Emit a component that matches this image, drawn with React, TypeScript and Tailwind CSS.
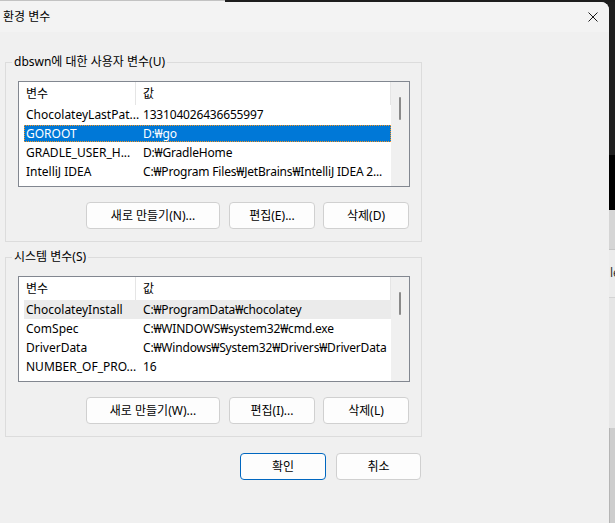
import React from 'react';

type Row = { name: string; value: string };

const userRows: Row[] = [
  { name: 'ChocolateyLastPat...', value: '133104026436655997' },
  { name: 'GOROOT', value: 'D:₩go' },
  { name: 'GRADLE_USER_H...', value: 'D:₩GradleHome' },
  { name: 'IntelliJ IDEA', value: 'C:₩Program Files₩JetBrains₩IntelliJ IDEA 2...' },
];

const systemRows: Row[] = [
  { name: 'ChocolateyInstall', value: 'C:₩ProgramData₩chocolatey' },
  { name: 'ComSpec', value: 'C:₩WINDOWS₩system32₩cmd.exe' },
  { name: 'DriverData', value: 'C:₩Windows₩System32₩Drivers₩DriverData' },
  { name: 'NUMBER_OF_PRO...', value: '16' },
];

function VarList({ rows, selected, hover }: { rows: Row[]; selected?: number; hover?: number }) {
  return (
    <div className="ml-[12px] mt-[11px] w-[392px] h-[106px] border border-[#828790] bg-white flex overflow-hidden">
      <div className="w-[372px] flex flex-col">
        <div className="h-[23px] flex shrink-0">
          <div className="w-[117px] pl-[7px] border-r border-[#e5e5e5] flex items-center">변수</div>
          <div className="flex-1 pl-[7px] border-r border-[#e5e5e5] flex items-center">값</div>
        </div>
        {rows.map((r, i) => {
          const sel = i === selected;
          const hov = i === hover;
          return (
            <div key={r.name} className="h-[19px] shrink-0 flex items-center">
              <div
                className={
                  'ml-[5px] w-[367px] flex items-center whitespace-nowrap overflow-hidden ' +
                  (sel
                    ? 'h-[17px] bg-[#0078d7] text-white outline outline-1 outline-dotted outline-[#f7931e] -outline-offset-1'
                    : hov
                      ? 'h-[19px] bg-[#ebebeb]'
                      : 'h-[19px]')
                }
              >
                <div className="w-[112px] pl-[2px] shrink-0">{r.name}</div>
                <div className="pl-[7px] tracking-[-0.18px]">{r.value}</div>
              </div>
            </div>
          );
        })}
      </div>
      <div className="w-[18px] bg-[#f0f0f0] flex flex-col pt-[15px]">
        <div className="ml-[8px] w-[2px] h-[23px] rounded-full bg-[#8a8a8a]" />
      </div>
    </div>
  );
}

function Btn({ label, w, primary }: { label: string; w: string; primary?: boolean }) {
  return (
    <button
      type="button"
      className={
        'h-[27px] rounded-[4px] bg-[#fdfdfd] flex items-center justify-center text-[12px] text-black border ' +
        w +
        (primary ? ' border-[#0067c0]' : ' border-[#d0d0d0]')
      }
    >
      {label}
    </button>
  );
}

function Group({
  title,
  rows,
  selected,
  hover,
  labels,
  className,
}: {
  title: string;
  rows: Row[];
  selected?: number;
  hover?: number;
  labels: string[];
  className: string;
}) {
  return (
    <fieldset className={'ml-[5px] w-[417px] border border-[#dcdcdc] pb-[12px] ' + className}>
      <legend className="ml-[6px] px-[2px] leading-[16px]">{title}</legend>
      <VarList rows={rows} selected={selected} hover={hover} />
      <div className="mt-[15px] flex justify-end pr-[12px]">
        <Btn label={labels[0]} w="w-[134px] mr-[9px]" />
        <Btn label={labels[1]} w="w-[86px] mr-[8px]" />
        <Btn label={labels[2]} w="w-[86px]" />
      </div>
    </fieldset>
  );
}

export default function App() {
  return (
    <div className="w-[615px] h-[523px] overflow-hidden bg-[#1d1d1d] text-[12px] text-black font-['Noto_Sans','Noto_Sans_CJK_KR',sans-serif]">
      <div className="h-[2px] flex">
        <div className="w-[225px] border-t border-[#c2c2c2] bg-[#f3f3f3]" />
        <div className="flex-1 bg-[#1d1d1d]" />
      </div>
      <div className="flex h-[521px]">
        <div className="w-[609px] h-full rounded-tr-[8px] bg-[#f0f0f0] overflow-hidden flex flex-col">
          <div className="h-[30px] bg-[#f3f3f3] flex items-center justify-between pl-[3px] pr-[11px]">
            <span>환경 변수</span>
            <svg width="10" height="10" viewBox="0 0 10 10">
              <path d="M0.5 0.5 L9.5 9.5 M9.5 0.5 L0.5 9.5" stroke="#1a1a1a" strokeWidth="1" />
            </svg>
          </div>
          <div className="pt-[22px] flex flex-col">
            <Group
              title="dbswn에 대한 사용자 변수(U)"
              rows={userRows}
              selected={1}
              labels={['새로 만들기(N)...', '편집(E)...', '삭제(D)']}
              className=""
            />
            <Group
              title="시스템 변수(S)"
              rows={systemRows}
              hover={0}
              labels={['새로 만들기(W)...', '편집(I)...', '삭제(L)']}
              className="mt-[7px]"
            />
            <div className="w-[421px] mt-[16px] flex justify-end gap-[10px]">
              <Btn label="확인" w="w-[86px]" primary />
              <Btn label="취소" w="w-[85px]" />
            </div>
          </div>
        </div>
        <div className="w-[6px] flex flex-col">
          <div className="h-[153px] bg-[#1f1f1f]" />
          <div className="h-[55px] bg-black" />
          <div className="h-[40px] bg-[#d5d5d5] border-b border-[#c4c4c4]" />
          <div className="h-[48px] bg-[#ececec] border-b border-[#d4d4d4] overflow-hidden whitespace-nowrap pt-[16px] pl-[1px] text-[#333] leading-[14px]">
            le
          </div>
          <div className="h-[130px] bg-[#e6e6e6]" />
          <div className="flex-1 bg-[#cdcdcd] border-l border-[#b5b5b5]" />
        </div>
      </div>
    </div>
  );
}
